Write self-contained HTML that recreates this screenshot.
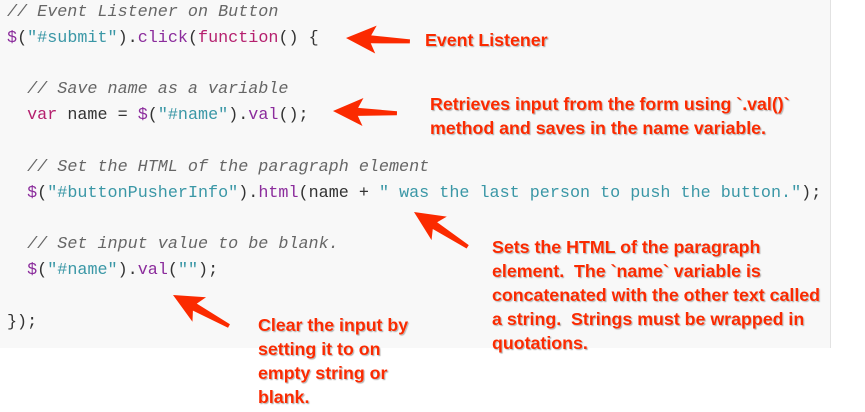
<!DOCTYPE html>
<html><head><meta charset="utf-8"><style>
body{margin:0;width:865px;height:412px;background:#fff;position:relative;overflow:hidden}
.bg{position:absolute;left:0;top:0;width:830px;height:348px;background:#f8f8f8;border-right:1px solid #e2e2e2}
pre{position:absolute;left:7px;top:0;margin:0;font-family:"Liberation Mono",monospace;font-size:16.75px;line-height:25.8px;color:#333}
.c{color:#666;font-style:italic}.p{color:#8b2c9c}.s{color:#3a97a6}.k{color:#b5206e}
.a{position:absolute;font-family:"Liberation Sans",sans-serif;font-weight:bold;font-size:17.8px;line-height:24px;color:#fb2a00;text-shadow:0 0 2px #fff,1px 1px 1px #999;white-space:nowrap}
svg{position:absolute;left:0;top:0}
</style></head><body>
<div class="bg"></div>
<pre><span class="c">// Event Listener on Button</span>
<span class="p">$</span>(<span class="s">"#submit"</span>).<span class="p">click</span>(<span class="k">function</span>() {

  <span class="c">// Save name as a variable</span>
  <span class="k">var</span> name = <span class="p">$</span>(<span class="s">"#name"</span>).<span class="p">val</span>();

  <span class="c">// Set the HTML of the paragraph element</span>
  <span class="p">$</span>(<span class="s">"#buttonPusherInfo"</span>).<span class="p">html</span>(name + <span class="s">" was the last person to push the button."</span>);

  <span class="c">// Set input value to be blank.</span>
  <span class="p">$</span>(<span class="s">"#name"</span>).<span class="p">val</span>(<span class="s">""</span>);

});</pre>
<svg width="865" height="412">
<defs><polygon id="ar" points="0,0 30,-14 25,-4 64,-2 64,2 25,4 30,14" fill="#fb2a00"/></defs>
<use href="#ar" transform="translate(346,38) rotate(3)"/>
<use href="#ar" transform="translate(333,111) rotate(2)"/>
<use href="#ar" transform="translate(414,212) rotate(33)"/>
<use href="#ar" transform="translate(173,295) rotate(29)"/>
</svg>
<div class="a" style="left:425px;top:28px">Event Listener</div>
<div class="a" style="left:430px;top:92px">Retrieves input from the form using `.val()`<br>method and saves in the name variable.</div>
<div class="a" style="left:492px;top:235px">Sets the HTML of the paragraph<br>element.&nbsp; The `name` variable is<br>concatenated with the other text called<br>a string.&nbsp; Strings must be wrapped in<br>quotations.</div>
<div class="a" style="left:258px;top:313px">Clear the input by<br>setting it to on<br>empty string or<br>blank.</div>
</body></html>
